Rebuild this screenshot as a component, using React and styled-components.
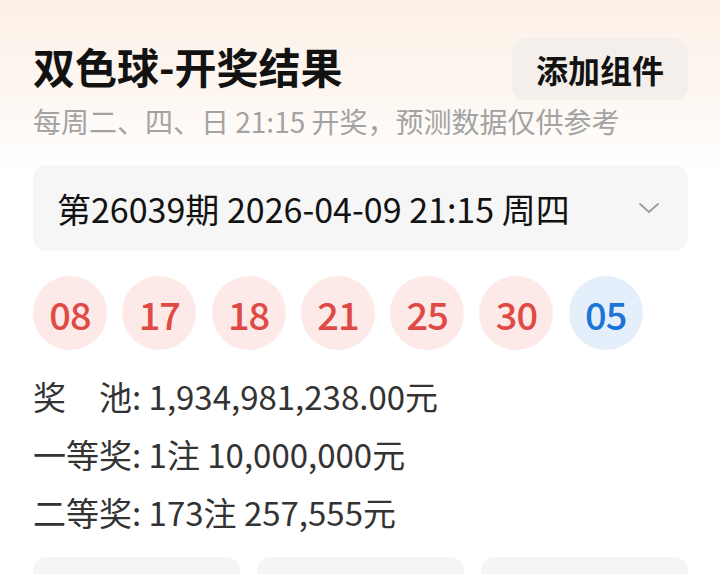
import React from "react";
import styled, { createGlobalStyle } from "styled-components";

const Global = createGlobalStyle`
  html, body { margin: 0; padding: 0; }
  body {
    width: 720px;
    height: 574px;
    overflow: hidden;
    background: #ffffff;
    font-family: "Noto Sans CJK SC", "Noto Sans", sans-serif;
  }
`;

const Page = styled.div`
  width: 720px;
  height: 574px;
  overflow: hidden;
  background: linear-gradient(180deg, #fcf1e8 0px, #fdf6f0 90px, #ffffff 170px);
  display: flex;
  flex-direction: column;
`;

const TopMark = styled.div`
  width: 40px;
  height: 3px;
  margin-left: 156px;
  background: #d6473f;
  border-radius: 0 0 2px 2px;
`;

const Content = styled.div`
  display: flex;
  flex-direction: column;
  padding: 0 32px 0 33px;
`;

const Header = styled.div`
  display: flex;
  justify-content: space-between;
  align-items: flex-start;
  margin-top: 38px;
`;

const Title = styled.h1`
  margin: 0;
  font-size: 42px;
  line-height: 56px;
  font-weight: 700;
  color: #121212;
  white-space: nowrap;
`;

const Subtitle = styled.div`
  margin-top: 3px;
  font-size: 28px;
  line-height: 36px;
  color: #a3a3a3;
  white-space: nowrap;
`;

const AddButton = styled.button`
  flex-shrink: 0;
  width: 176px;
  height: 62px;
  border: none;
  border-radius: 14px;
  background: #f4efea;
  font-family: inherit;
  font-size: 32px;
  font-weight: 700;
  color: #121212;
  padding: 0;
  cursor: pointer;
`;

const Selector = styled.div`
  margin-top: 26px;
  height: 86px;
  border-radius: 14px;
  background: #f6f6f6;
  display: flex;
  align-items: center;
  justify-content: space-between;
  padding: 0 28px 0 24px;
`;

const SelectorText = styled.span`
  font-size: 34px;
  color: #121212;
  white-space: nowrap;
`;

const Balls = styled.div`
  display: flex;
  gap: 15.3px;
  margin-top: 25px;
`;

const Ball = styled.div`
  width: 74px;
  height: 74px;
  border-radius: 50%;
  display: flex;
  align-items: center;
  justify-content: center;
  font-size: 38px;
  font-weight: 500;
  letter-spacing: -1px;
  background: ${(p) => (p.$blue ? "#e5effc" : "#fde9e7")};
  color: ${(p) => (p.$blue ? "#1c74d8" : "#e04a45")};
`;

const InfoList = styled.div`
  display: flex;
  flex-direction: column;
  margin-top: 17px;
`;

const InfoLine = styled.div`
  font-size: 33px;
  line-height: 58px;
  color: #333333;
  white-space: nowrap;
`;

const Cards = styled.div`
  display: grid;
  grid-template-columns: repeat(3, 1fr);
  gap: 17px;
  margin-top: 16px;
`;

const Card = styled.div`
  height: 80px;
  border-radius: 14px;
  background: #f5f5f5;
`;

const Chevron = () => (
  <svg width="22" height="14" viewBox="0 0 22 14" fill="none">
    <path d="M2 3 L11 11 L20 3" stroke="#9a9a9a" strokeWidth="1.7" strokeLinecap="round" strokeLinejoin="round" />
  </svg>
);

const reds = ["08", "17", "18", "21", "25", "30"];

export default function App() {
  return (
    <>
      <Global />
      <Page>
        <TopMark />
        <Content>
          <Header>
            <Title>双色球-开奖结果</Title>
            <AddButton>添加组件</AddButton>
          </Header>
          <Subtitle>每周二、四、日 21:15 开奖，预测数据仅供参考</Subtitle>
          <Selector>
            <SelectorText>第26039期 2026-04-09 21:15 周四</SelectorText>
            <Chevron />
          </Selector>
          <Balls>
            {reds.map((n) => (
              <Ball key={n}>{n}</Ball>
            ))}
            <Ball $blue>05</Ball>
          </Balls>
          <InfoList>
            <InfoLine>奖　池: 1,934,981,238.00元</InfoLine>
            <InfoLine>一等奖: 1注 10,000,000元</InfoLine>
            <InfoLine>二等奖: 173注 257,555元</InfoLine>
          </InfoList>
          <Cards>
            <Card />
            <Card />
            <Card />
          </Cards>
        </Content>
      </Page>
    </>
  );
}
